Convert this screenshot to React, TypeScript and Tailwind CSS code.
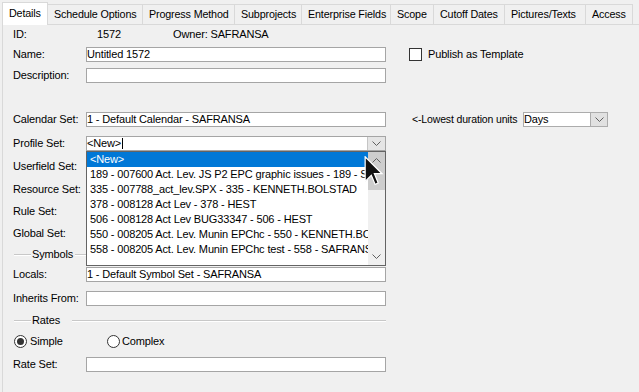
import React from 'react';

const tabs = [
  { label: 'Details', w: 'w-[46px]' },
  { label: 'Schedule Options', w: 'w-[95px]' },
  { label: 'Progress Method', w: 'w-[92px]' },
  { label: 'Subprojects', w: 'w-[67px]' },
  { label: 'Enterprise Fields', w: 'w-[89px]' },
  { label: 'Scope', w: 'w-[43px]' },
  { label: 'Cutoff Dates', w: 'w-[71px]' },
  { label: 'Pictures/Texts', w: 'w-[81px]' },
  { label: 'Access', w: 'w-[47px]' },
];

const listItems = [
  '<New>',
  '189 - 007600 Act. Lev. JS P2 EPC graphic issues - 189 - SAFRANSA',
  '335 - 007788_act_lev.SPX - 335 - KENNETH.BOLSTAD',
  '378 - 008128 Act Lev - 378 - HEST',
  '506 - 008128 Act Lev BUG33347 - 506 - HEST',
  '550 - 008205 Act. Lev. Munin EPChc - 550 - KENNETH.BOLSTAD',
  '558 - 008205 Act. Lev. Munin EPChc test - 558 - SAFRANSA',
];

const Chevron = ({ up = false }: { up?: boolean }) => (
  <svg width="9" height="5" viewBox="0 0 9 5" className={up ? 'rotate-180' : ''}>
    <polyline points="0.5,0.5 4.5,4.5 8.5,0.5" fill="none" stroke="#606060" strokeWidth="1" />
  </svg>
);

const TextBox = ({ value = '' }: { value?: string }) => (
  <div className="flex h-[15px] w-[300px] shrink-0 items-center overflow-hidden whitespace-nowrap border border-[#a5a5a5] bg-white">
    {value}
  </div>
);

const Row = ({ label, mt, children }: { label: string; mt: string; children?: React.ReactNode }) => (
  <div className={`flex h-[15px] items-center ${mt}`}>
    <div className="w-[73px] shrink-0 whitespace-nowrap">{label}</div>
    {children}
  </div>
);

const Separator = ({ label, mt, gap }: { label: string; mt: string; gap: string }) => (
  <div className={`flex h-[15px] w-[373px] items-center ${mt}`}>
    <div className="ml-px w-[17px] border-t border-b border-t-[#c8c8c8] border-b-white" />
    <div className={`pl-[1px] ${gap}`}>{label}</div>
    <div className="flex-1 border-t border-b border-t-[#c8c8c8] border-b-white" />
  </div>
);

const Radio = ({ checked }: { checked?: boolean }) => (
  <div className="flex h-[13px] w-[13px] items-center justify-center rounded-full border border-[#333] bg-white">
    {checked && <div className="h-[7px] w-[7px] rounded-full bg-[#333]" />}
  </div>
);

const App = () => {
  return (
    <div
      className="relative h-[392px] w-[639px] overflow-hidden bg-[#f0f0f0] text-[11px] leading-[13px] tracking-[-0.15px] text-black"
      style={{ fontFamily: '"Liberation Sans", Arial, sans-serif' }}
    >
      {/* tab strip */}
      <div className="flex h-[24px] items-end pl-[2px] text-[10.75px]">
        {tabs.map((t, i) =>
          i === 0 ? (
            <div
              key={t.label}
              className={`relative z-10 -mb-px flex h-[23px] ${t.w} items-center whitespace-nowrap border-t border-r border-l border-[#d9d9d9] bg-white pb-[1px] pl-[6px]`}
            >
              {t.label}
            </div>
          ) : (
            <div
              key={t.label}
              className={`flex h-[20px] ${t.w} items-center whitespace-nowrap border-t border-r border-[#d9d9d9] bg-[#f0f0f0] pl-[6px]`}
            >
              {t.label}
            </div>
          )
        )}
      </div>

      {/* details page */}
      <div className="ml-[2px] h-[368px] border-t border-l border-[#d9d9d9] pt-[3px] pl-[10px]">
        <div className="flex h-[13px] items-center">
          <div className="w-[84px]">ID:</div>
          <div className="w-[76px]">1572</div>
          <div>Owner: SAFRANSA</div>
        </div>

        <Row label="Name:" mt="mt-[6px]">
          <TextBox value="Untitled 1572" />
          <div className="ml-[23px] h-[13px] w-[13px] border border-[#333] bg-white" />
          <div className="ml-[6px]">Publish as Template</div>
        </Row>

        <Row label="Description:" mt="mt-[6px]">
          <TextBox />
        </Row>

        <Row label="Calendar Set:" mt="mt-[29px]">
          <TextBox value="1 - Default Calendar - SAFRANSA" />
          <div className="ml-[26px] w-[111px] shrink-0 whitespace-nowrap text-[10.5px]">&lt;-Lowest duration units</div>
          <div className="flex h-[15px] w-[85px] shrink-0 border border-[#acacac] bg-white">
            <div className="flex flex-1 items-center">Days</div>
            <div className="flex w-[17px] items-center justify-center border-l border-[#acacac] bg-[#e1e1e1]">
              <Chevron />
            </div>
          </div>
        </Row>

        <Row label="Profile Set:" mt="mt-[9px]">
          <div className="relative">
            <div className="flex h-[15px] w-[300px] border border-[#a5a5a5] bg-white">
              <div className="flex flex-1 items-center">
                &lt;New&gt;
                <div className="ml-px h-[11px] w-px bg-black" />
              </div>
              <div className="flex w-[18px] items-center justify-center border-l border-[#c5c5c5] bg-[#e5e5e5]">
                <Chevron />
              </div>
            </div>

            {/* open drop-down list */}
            <div className="absolute top-[15px] left-0 z-10 flex h-[115px] w-[300px] border border-[#646464] bg-white">
              <div className="flex-1 overflow-hidden">
                {listItems.map((item, i) => (
                  <div
                    key={item}
                    className={`flex h-[15px] items-center overflow-hidden whitespace-nowrap pl-[3px] ${
                      i === 0 ? 'bg-[#0078d7] text-white' : ''
                    }`}
                  >
                    {item}
                  </div>
                ))}
              </div>
              <div className="flex w-[17px] flex-col bg-[#f0f0f0]">
                <div className="flex h-[38px] items-start justify-center bg-[#cdcdcd] pt-[6px]">
                  <Chevron up />
                </div>
                <div className="flex-1" />
                <div className="flex h-[17px] items-center justify-center">
                  <Chevron />
                </div>
              </div>
            </div>
          </div>
        </Row>

        <Row label="Userfield Set:" mt="mt-[8px]" />
        <Row label="Resource Set:" mt="mt-[8px]" />
        <Row label="Rule Set:" mt="mt-[7px]" />
        <Row label="Global Set:" mt="mt-[7px]" />

        <Separator label="Symbols" mt="mt-[6px]" gap="pr-[2px]" />

        <Row label="Locals:" mt="mt-[5px]">
          <TextBox value="1 - Default Symbol Set - SAFRANSA" />
        </Row>

        <Row label="Inherits From:" mt="mt-[9px]">
          <TextBox />
        </Row>

        <Separator label="Rates" mt="mt-[7px]" gap="pr-[12px]" />

        <div className="mt-[6px] flex h-[14px] items-center">
          <div className="ml-px">
            <Radio checked />
          </div>
          <div className="ml-[3px] w-[77px]">Simple</div>
          <Radio />
          <div className="ml-[2px]">Complex</div>
        </div>

        <Row label="Rate Set:" mt="mt-[9px]">
          <TextBox />
        </Row>
      </div>

      {/* mouse pointer over the list */}
      <svg
        className="absolute top-[156px] left-[364px] z-20"
        width="20"
        height="30"
        viewBox="0 0 12.5 19.5"
      >
        <path
          d="M0.5,0.5 L0.5,16.5 L4.5,12.5 L7,18.5 L9,17.5 L6.5,11.5 L11.5,11.5 Z"
          fill="#111"
          stroke="#fff"
          strokeWidth="0.8"
          strokeLinejoin="miter"
        />
      </svg>
    </div>
  );
};

export default App;
